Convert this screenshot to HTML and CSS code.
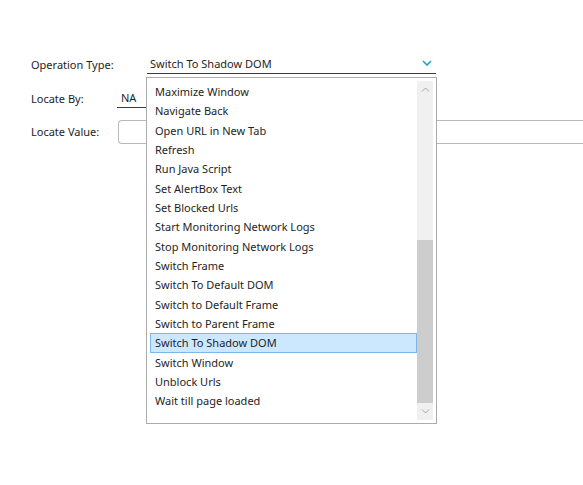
FILE: index.html
```html
<!DOCTYPE html>
<html>
<head>
<meta charset="utf-8">
<link rel="stylesheet" href="styles.css">
</head>
<body>
<div class="form">
  <div class="row row-op">
    <span class="label w-op">Operation Type:</span>
    <div class="combo">
      <span class="combo-text">Switch To Shadow DOM</span>
      <svg class="chev" width="10" height="6" viewBox="0 0 10 6"><polyline points="1,1 5,5 9,1" fill="none" stroke="#1a9fd0" stroke-width="1.6"/></svg>
    </div>
  </div>
  <div class="row row-by">
    <span class="label w-by">Locate By:</span>
    <div class="underline-field">NA</div>
  </div>
  <div class="row row-val">
    <span class="label w-val">Locate Value:</span>
    <div class="textbox"></div>
  </div>

  <div class="popup">
    <ul class="list">
      <li>Maximize Window</li>
      <li>Navigate Back</li>
      <li>Open URL in New Tab</li>
      <li>Refresh</li>
      <li>Run Java Script</li>
      <li>Set AlertBox Text</li>
      <li>Set Blocked Urls</li>
      <li>Start Monitoring Network Logs</li>
      <li>Stop Monitoring Network Logs</li>
      <li>Switch Frame</li>
      <li>Switch To Default DOM</li>
      <li>Switch to Default Frame</li>
      <li>Switch to Parent Frame</li>
      <li class="selected">Switch To Shadow DOM</li>
      <li>Switch Window</li>
      <li>Unblock Urls</li>
      <li>Wait till page loaded</li>
    </ul>
    <div class="scrollbar">
      <div class="sb-btn"><svg width="9" height="5" viewBox="0 0 9 5"><polyline points="1,4.5 4.5,1 8,4.5" fill="none" stroke="#a6a6a6" stroke-width="1"/></svg></div>
      <div class="sb-track"><div class="sb-thumb"></div></div>
      <div class="sb-btn"><svg width="9" height="5" viewBox="0 0 9 5"><polyline points="1,0.5 4.5,4 8,0.5" fill="none" stroke="#a6a6a6" stroke-width="1"/></svg></div>
    </div>
  </div>
</div>
</body>
</html>
```

FILE: styles.css
```css
html, body {
  margin: 0;
  padding: 0;
  background: #ffffff;
}
body {
  font-family: "Noto Sans", "Open Sans", sans-serif;
  font-size: 11px;
  color: #1e1e1e;
  overflow: hidden;
  width: 583px;
  height: 485px;
}
.form {
  position: relative;
  padding-top: 55px;
  padding-left: 31px;
  display: flex;
  flex-direction: column;
}
.row {
  display: flex;
  align-items: center;
}
.label {
  flex: none;
  line-height: 18px;
}
.w-op { width: 116px; }
.w-by { width: 86px; }
.w-val { width: 87px; }

.row-op { height: 19px; }
.combo {
  width: 289px;
  height: 19px;
  box-sizing: border-box;
  border-bottom: 1px solid #3c3c3c;
  display: flex;
  align-items: center;
  justify-content: space-between;
  padding-left: 3px;
  padding-right: 4px;
}
.combo-text { line-height: 18px; }
.chev { margin-top: -3px; }

.row-by { margin-top: 15px; }
.underline-field {
  width: 319px;
  height: 19px;
  box-sizing: border-box;
  border-bottom: 1px solid #3c3c3c;
  padding-left: 4px;
  line-height: 18px;
}
.row-val { margin-top: 12px; }
.textbox {
  width: 500px;
  height: 24px;
  box-sizing: border-box;
  border: 1px solid #b9b9b9;
  border-right: none;
  border-radius: 4px 0 0 4px;
}

.popup {
  position: absolute;
  left: 146px;
  top: 77px;
  width: 291px;
  height: 347px;
  box-sizing: border-box;
  border: 1px solid #acacac;
  background: #ffffff;
  display: flex;
  padding: 3px 3px 3px 3px;
}
.list {
  list-style: none;
  margin: 0;
  padding: 1px 0 0 0;
  flex: 1;
}
.list li {
  height: 19.33px;
  line-height: 19px;
  padding-left: 5px;
  box-sizing: border-box;
  white-space: nowrap;
}
.list li.selected {
  background: #cce8ff;
  border: 1px solid #7db6e8;
  padding-left: 4px;
  line-height: 17px;
}
.scrollbar {
  width: 16px;
  flex: none;
  background: #f0f0f0;
  display: flex;
  flex-direction: column;
}
.sb-btn {
  height: 17px;
  display: flex;
  align-items: center;
  justify-content: center;
  flex: none;
}
.sb-track {
  flex: 1;
  display: flex;
  flex-direction: column;
  justify-content: flex-end;
}
.sb-thumb {
  height: 163px;
  background: #cdcdcd;
}
```
